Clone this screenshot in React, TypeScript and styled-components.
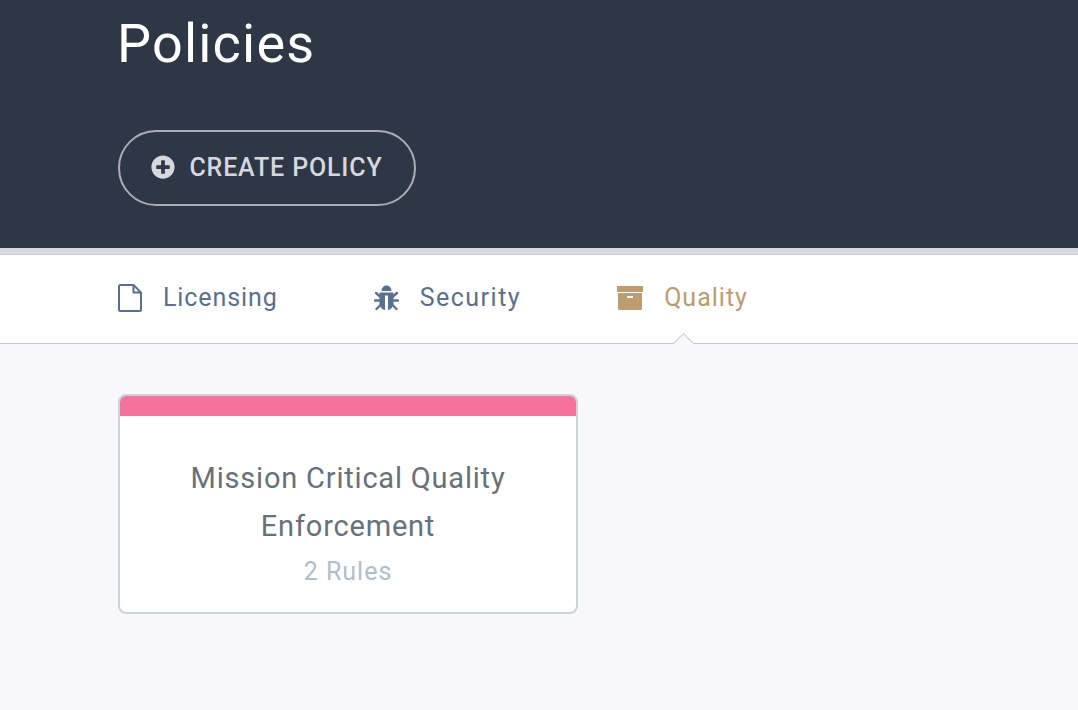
import React from "react";
import styled, { createGlobalStyle } from "styled-components";
import { FaPlusCircle } from "react-icons/fa";

const Global = createGlobalStyle`
  html, body { margin: 0; padding: 0; background: #f8f8fa; }
  body { font-family: "Roboto", "Liberation Sans", sans-serif; overflow: hidden; }
`;

const Page = styled.div`
  height: 710px;
  display: flex;
  flex-direction: column;
  background: #f8f8fa;
`;

const Header = styled.header`
  height: 248px;
  box-sizing: border-box;
  background: #2e3746;
  padding: 13px 118px 0;
  display: flex;
  flex-direction: column;
  align-items: flex-start;
`;

const Title = styled.h1`
  margin: 0 0 0 -1px;
  font-size: 54px;
  line-height: 62px;
  font-weight: 400;
  letter-spacing: 1.2px;
  color: #fff;
`;

const CreateButton = styled.button`
  margin-top: 55px;
  width: 298px;
  height: 76px;
  box-sizing: border-box;
  border: 2px solid #a9adb4;
  border-radius: 38px;
  background: transparent;
  color: #d6d8dc;
  display: flex;
  align-items: center;
  justify-content: center;
  gap: 14px;
  padding: 0 0 2px;
  font-family: inherit;
  font-size: 25px;
  font-weight: 500;
  letter-spacing: 0.85px;
`;

const Strip = styled.div`
  height: 7px;
  box-sizing: border-box;
  background: #d8d9da;
  border-bottom: 1px solid #c9cbd0;
`;

const Tabs = styled.nav`
  height: 89px;
  box-sizing: border-box;
  background: #fff;
  border-bottom: 1px solid #c8cad3;
  padding: 0 118px 3px;
  display: flex;
  align-items: center;
  gap: 96px;
`;

const Tab = styled.div<{ $active?: boolean; $spacing?: number }>`
  position: relative;
  display: flex;
  align-items: center;
  gap: 21px;
  font-size: 25px;
  letter-spacing: ${(p) => p.$spacing ?? 0.9}px;
  color: ${(p) => (p.$active ? "#bd9c6e" : "#5a7090")};
`;

const Caret = styled.span`
  position: absolute;
  left: 59px;
  top: 53px;
  width: 14px;
  height: 14px;
  background: #f8f8fa;
  border-left: 1px solid #c8cad3;
  border-top: 1px solid #c8cad3;
  transform: rotate(45deg);
`;

const Content = styled.main`
  padding: 50px 118px 0;
`;

const Card = styled.article`
  width: 460px;
  height: 220px;
  box-sizing: border-box;
  background: #fff;
  border: 2px solid #c9d4de;
  border-radius: 8px;
  overflow: hidden;
  text-align: center;
`;

const CardBand = styled.div`
  height: 20px;
  background: #f5729b;
`;

const CardTitle = styled.h2`
  margin: 38px 20px 0;
  font-size: 29px;
  line-height: 48px;
  font-weight: 400;
  letter-spacing: 0.8px;
  color: #67717b;
`;

const CardMeta = styled.div`
  margin-top: 6px;
  font-size: 25px;
  line-height: 32px;
  letter-spacing: 1px;
  color: #b0bfcd;
`;

const FileIcon = () => (
  <svg width="24" height="28" viewBox="0 0 24 28" fill="none" stroke="#5a7090" strokeWidth="2" strokeLinejoin="round">
    <path d="M2.5 1h13L23 8.5V25.5a1.5 1.5 0 0 1-1.5 1.5h-19A1.5 1.5 0 0 1 1 25.5V2.5A1.5 1.5 0 0 1 2.5 1z" />
    <path d="M15.5 1v7.5H23" />
  </svg>
);

const BugIcon = () => (
  <svg width="25" height="26" viewBox="0 0 25 26" fill="#5a7090" stroke="none">
    <path d="M7.5 6C7.5 2.5 10 .5 12.5 .5S17.5 2.5 17.5 6Z" />
    <path d="M5.5 7.5h14V18c0 3.5-2.5 6.5-5.5 7V10.5h-3V25c-3-.5-5.5-3.5-5.5-7Z" />
    <g stroke="#5a7090" strokeWidth="2.4" strokeLinecap="round" fill="none">
      <path d="M6 11.5 2 8" />
      <path d="M19 11.5 23 8" />
      <path d="M5.5 15.5H1" />
      <path d="M19.5 15.5H24" />
      <path d="M6.5 20 2.5 24" />
      <path d="M18.5 20 22.5 24" />
    </g>
  </svg>
);

const ArchiveIcon = () => (
  <svg width="26" height="24" viewBox="0 0 26 24" fill="#bd9c6e">
    <rect x="0" y="0" width="26" height="6" rx="0.5" />
    <path fillRule="evenodd" d="M1 7h24v16a1 1 0 0 1-1 1H2a1 1 0 0 1-1-1ZM10 10v2h6v-2Z" />
  </svg>
);

export default function App() {
  return (
    <Page>
      <Global />
      <Header>
        <Title>Policies</Title>
        <CreateButton>
          <FaPlusCircle size={24} color="#d6d8dc" />
          CREATE POLICY
        </CreateButton>
      </Header>
      <Strip />
      <Tabs>
        <Tab>
          <FileIcon />
          Licensing
        </Tab>
        <Tab $spacing={1.5}>
          <BugIcon />
          Security
        </Tab>
        <Tab $active $spacing={1}>
          <ArchiveIcon />
          Quality
          <Caret />
        </Tab>
      </Tabs>
      <Content>
        <Card>
          <CardBand />
          <CardTitle>Mission Critical Quality Enforcement</CardTitle>
          <CardMeta>2 Rules</CardMeta>
        </Card>
      </Content>
    </Page>
  );
}
